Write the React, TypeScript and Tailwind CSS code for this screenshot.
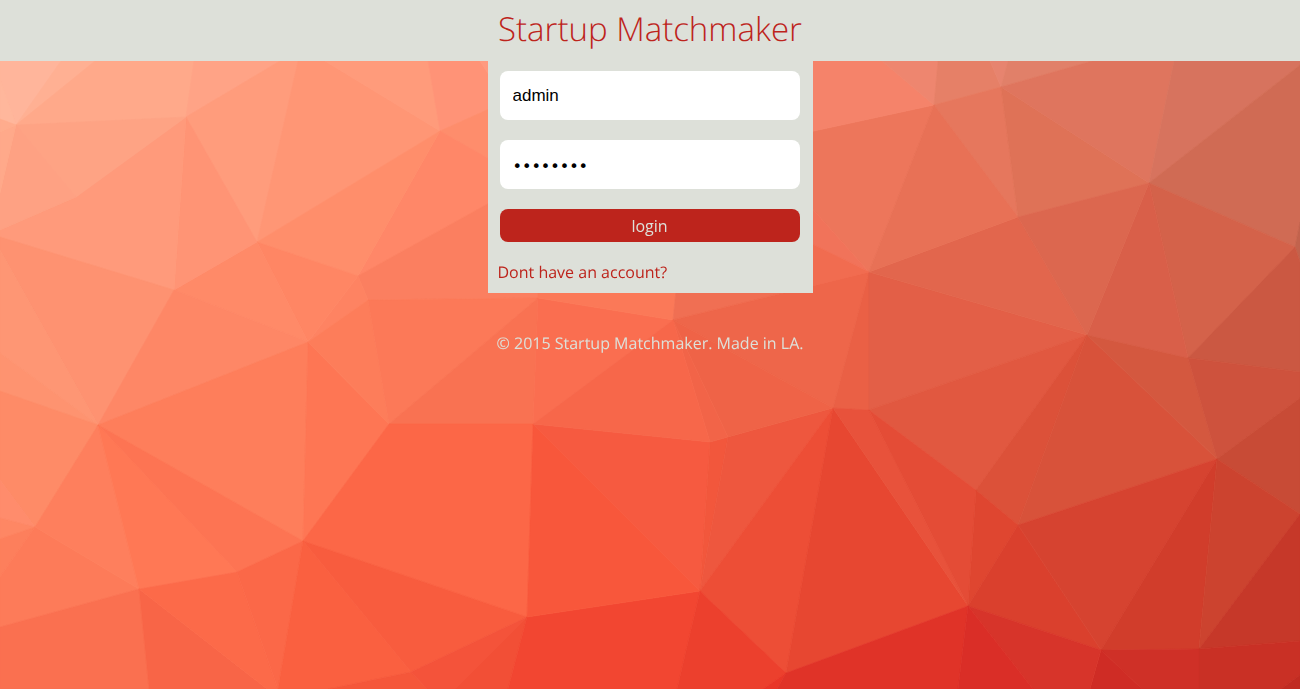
import { useState } from "react";

type Facet = [points: string, fill: string];

const facets: Facet[] = [
  ["0,0 61,61 16,125 0,80", "#ffb59b"],
  ["0,80 16,125 0,119", "#ffb79c"],
  ["61,61 95,61 16,125", "#ffb093"],
  ["95,61 194,61 186,117 16,125", "#ffa98a"],
  ["194,61 280,61 186,117", "#ffa386"],
  ["280,61 298,61 257,242 186,117", "#ff9c7c"],
  ["298,61 325,61 440,131 257,242", "#ff9675"],
  ["325,61 428,61 440,131", "#ff9b7b"],
  ["428,61 480,61 500,92 500,104 440,131", "#ff9377"],
  ["480,61 500,61 500,92", "#ff9a80"],
  ["440,131 500,104 500,165", "#fe8d6c"],
  ["440,131 500,165 500,197 358,276", "#ff8768"],
  ["257,242 440,131 358,276", "#ff8e6b"],
  ["358,276 500,197 538,280 538,298 368,300", "#fb7f60"],
  ["358,276 368,300 308,342", "#fe8362"],
  ["257,242 358,276 308,342", "#ff8664"],
  ["174,290 257,242 308,342", "#ff8a68"],
  ["186,117 257,242 174,290", "#ff9475"],
  ["186,117 174,290 0,237 0,230 76,197", "#ff9a7b"],
  ["16,125 186,117 76,197", "#fea384"],
  ["16,125 76,197 0,230 0,193", "#fea183"],
  ["16,125 0,132 0,193", "#ffa98a"],
  ["16,125 0,119 0,132", "#ffac8d"],
  ["0,237 174,290 98,425 0,250", "#fe9271"],
  ["0,250 98,425 0,353", "#fe9674"],
  ["0,353 98,425 0,391", "#fe9370"],
  ["174,290 308,342 98,425", "#fe8766"],
  ["308,342 98,425 303,541", "#fe7e5b"],
  ["308,342 389,424 303,541", "#fe7654"],
  ["308,342 368,300 389,424", "#fd7d5a"],
  ["368,300 538,298 389,424", "#fc7958"],
  ["538,298 533,424 389,424", "#f97252"],
  ["389,424 533,424 527,617 303,541", "#fc6747"],
  ["0,391 98,425 35,527 0,480", "#fe8b67"],
  ["0,480 35,527 0,518", "#ff8c6c"],
  ["0,518 35,527 0,539", "#fe8764"],
  ["0,539 35,527 0,577", "#fd7f5c"],
  ["0,577 35,527 139,589 0,627", "#fd7b59"],
  ["98,425 35,527 139,589", "#fe7f5d"],
  ["98,425 139,589 237,572", "#ff7855"],
  ["98,425 237,572 303,541", "#fd7453"],
  ["0,627 139,589 149,689 0,689", "#fa7050"],
  ["139,589 149,689 267,689", "#f86547"],
  ["139,589 237,572 278,689 267,689", "#fc6a49"],
  ["237,572 303,541 278,689", "#fb6848"],
  ["303,541 278,689 328,689 411,672", "#fa6040"],
  ["303,541 527,617 411,672", "#f85c3e"],
  ["411,672 328,689 427,689", "#f5573a"],
  ["411,672 527,617 455,689 427,689", "#f4533a"],
  ["527,617 455,689 508,689", "#f24f36"],
  ["527,617 700,591 677,689 508,689", "#f24631"],
  ["533,424 527,617 700,591", "#f8573b"],
  ["533,424 710,442 700,591", "#f65a40"],
  ["710,442 728,437 700,591", "#f2573c"],
  ["728,437 833,408 700,591", "#ee573e"],
  ["700,591 833,408 786,673", "#ed4e36"],
  ["700,591 677,689 763,689 786,673", "#ec402d"],
  ["786,673 763,689 777,689", "#e93628"],
  ["833,408 968,606 786,673", "#e74731"],
  ["786,673 968,606 958,689 777,689", "#e03328"],
  ["538,298 673,320 533,424", "#fa6e50"],
  ["538,298 538,280 677,280 673,320", "#fb7958"],
  ["673,320 677,280 703,280 869,272", "#f06f53"],
  ["673,320 869,272 833,408", "#ee664a"],
  ["673,320 728,437 833,408", "#ef6347"],
  ["673,320 710,442 728,437", "#f26448"],
  ["673,320 533,424 710,442", "#f7674a"],
  ["833,408 869,272 869,410", "#ea6045"],
  ["869,272 869,410 1087,335", "#e35f47"],
  ["869,272 1087,335 1018,217", "#e2664d"],
  ["800,134 934,105 869,272 800,195", "#ed765b"],
  ["800,195 869,272 800,238", "#f1735a"],
  ["800,238 869,272 800,289", "#f16c50"],
  ["800,61 882,61 934,105 800,134", "#f5836a"],
  ["882,61 938,61 934,105", "#ee866f"],
  ["938,61 990,61 1001,87 934,105", "#e68067"],
  ["990,61 1008,61 1001,87", "#e7846f"],
  ["1008,61 1092,61 1001,87", "#e18069"],
  ["934,105 1001,87 1018,217", "#e6775d"],
  ["934,105 1018,217 869,272", "#e87156"],
  ["1001,87 1018,217 1149,183", "#df7257"],
  ["1001,87 1092,61 1174,61 1149,183", "#df755e"],
  ["1174,61 1300,61 1300,65 1149,183", "#d7735e"],
  ["1149,183 1300,65 1300,222 1295,247", "#d06b54"],
  ["1149,183 1295,247 1188,358", "#d4624a"],
  ["1149,183 1188,358 1087,335", "#d95f49"],
  ["1149,183 1087,335 1018,217", "#dc674f"],
  ["1295,247 1300,222 1300,262", "#c2634d"],
  ["1295,247 1300,262 1300,372 1188,358", "#cb5842"],
  ["869,410 1087,335 976,490", "#e15840"],
  ["1087,335 976,490 1018,525", "#dc5139"],
  ["1087,335 1018,525 1217,459", "#d8523a"],
  ["1087,335 1188,358 1217,459", "#d4583f"],
  ["1188,358 1300,372 1300,398 1217,459", "#ce523d"],
  ["1217,459 1300,398 1300,514", "#c84b36"],
  ["833,408 869,410 968,606", "#e8523b"],
  ["869,410 976,490 968,606", "#e44c36"],
  ["976,490 1018,525 968,606", "#df4630"],
  ["1018,525 968,606 1101,650", "#da402d"],
  ["1018,525 1217,459 1101,650", "#d64330"],
  ["1217,459 1101,650 1199,649", "#d13d2b"],
  ["1217,459 1199,649 1300,514", "#cc432f"],
  ["1199,649 1300,514 1300,641", "#c63829"],
  ["1199,649 1300,641 1300,675 1281,689 1199,689", "#c93025"],
  ["1300,675 1281,689 1300,689", "#c12b22"],
  ["1101,650 1199,649 1199,689 1142,689", "#cf3027"],
  ["1101,650 1142,689 1090,689", "#cf2c25"],
  ["968,606 1101,650 1090,689 1033,689", "#d7342a"],
  ["968,606 958,689 1033,689", "#da2e27"],
];

function PolygonBackdrop() {
  return (
    <svg
      aria-hidden="true"
      className="fixed inset-0 -z-10 h-full w-full"
      viewBox="0 0 1300 689"
      preserveAspectRatio="xMidYMid slice"
    >
      <rect width="1300" height="689" fill="#ffb59b" />
      {facets.map(([points, fill]) => (
        <polygon key={points} points={points} fill={fill} stroke={fill} strokeWidth="0.6" />
      ))}
    </svg>
  );
}

export default function App() {
  const [username, setUsername] = useState("admin");
  const [password, setPassword] = useState("password");

  return (
    <div className="relative isolate flex min-h-screen flex-col items-center bg-[#fc6747] font-['Open_Sans',sans-serif] text-base leading-6 font-medium [text-rendering:geometricPrecision]">
      <PolygonBackdrop />
      <header className="w-full bg-[#dde0d9] pt-1 pb-2 text-center">
        <h1 className="text-[33px] leading-[49px] font-light text-[#bd241c]">Startup Matchmaker</h1>
      </header>
      <main className="w-[325px] max-w-full bg-[#dde0d9] pt-[10px] pb-[9px]">
        <form className="flex flex-col gap-5 pr-[13px] pl-3" onSubmit={(e) => e.preventDefault()}>
          <input
            type="text"
            aria-label="Username"
            className="h-[49px] w-full rounded-lg bg-white px-[13px] font-['Liberation_Sans',sans-serif] text-[17px] font-normal text-black outline-none"
            value={username}
            onChange={(e) => setUsername(e.target.value)}
          />
          <input
            type="password"
            aria-label="Password"
            className="h-[49px] w-full rounded-lg bg-white px-[13px] pt-1 font-['DejaVu_Sans',sans-serif] text-base font-normal text-black outline-none"
            value={password}
            onChange={(e) => setPassword(e.target.value)}
          />
          <button type="submit" className="h-[33px] w-full rounded-lg bg-[#bd241c] text-[#dde0d9]">
            login
          </button>
        </form>
        <a href="#signup" className="mt-[18px] ml-[10px] block w-fit text-[#bd241c]">
          Dont have an account?
        </a>
      </main>
      <footer className="mt-[38px] pb-6 text-center text-[#dde0d9]">
        <p>© 2015 Startup Matchmaker. Made in LA.</p>
      </footer>
    </div>
  );
}
